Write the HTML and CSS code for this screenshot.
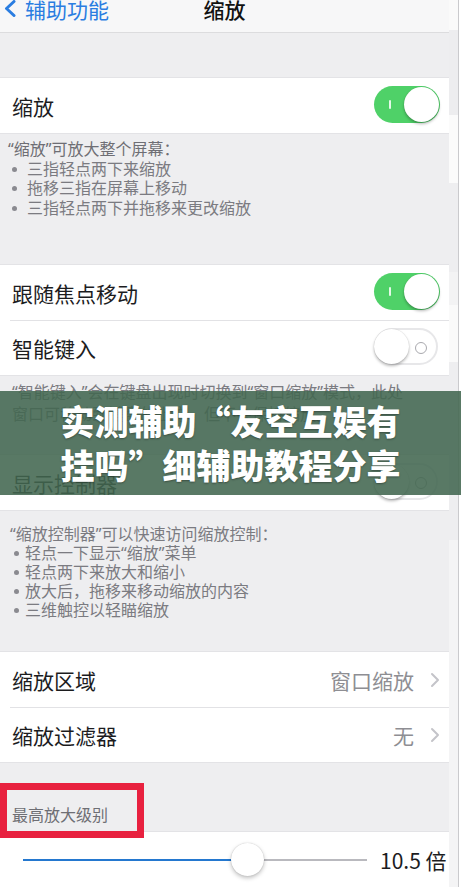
FILE: index.html
```html
<!DOCTYPE html>
<html lang="zh-CN">
<head>
<meta charset="utf-8">
<title>缩放</title>
<link rel="stylesheet" href="styles.css">
</head>
<body>
<div class="screen">
  <div class="main">
    <header class="nav">
      <div class="back">
        <svg class="chev-back" width="14" height="17" viewBox="0 0 14 17"><polyline points="11,1.5 3.5,8.5 11,15.5" fill="none" stroke="#2a7de1" stroke-width="3" stroke-linecap="round" stroke-linejoin="round"/></svg>
        <span class="back-text">辅助功能</span>
      </div>
      <div class="title">缩放</div>
      <div></div>
    </header>
    <div class="gap-top"></div>

    <div class="group">
      <div class="row"><span class="label">缩放</span><span class="toggle on"><span class="knob"></span></span></div>
    </div>
    <div class="footer f1">
      <p class="lead">“缩放”可放大整个屏幕：</p>
      <p class="item wide"><i class="dot"></i>三指轻点两下来缩放</p>
      <p class="item wide"><i class="dot"></i>拖移三指在屏幕上移动</p>
      <p class="item wide"><i class="dot"></i>三指轻点两下并拖移来更改缩放</p>
    </div>

    <div class="group">
      <div class="row"><span class="label">跟随焦点移动</span><span class="toggle on"><span class="knob"></span></span></div>
      <div class="sep"></div>
      <div class="row short"><span class="label">智能键入</span><span class="toggle off"><span class="knob"></span></span></div>
    </div>
    <div class="footer f3">
      <p>“智能键入”会在键盘出现时切换到“窗口缩放”模式，此处</p>
      <p>窗口可移动到键盘的上方，但不会保持缩放。</p>
    </div>

    <div class="group">
      <div class="row"><span class="label">显示控制器</span><span class="toggle off"><span class="knob"></span></span></div>
    </div>
    <div class="footer f4">
      <p class="lead">“缩放控制器”可以快速访问缩放控制：</p>
      <p class="item"><i class="dot"></i>轻点一下显示“缩放”菜单</p>
      <p class="item"><i class="dot"></i>轻点两下来放大和缩小</p>
      <p class="item"><i class="dot"></i>放大后，拖移来移动缩放的内容</p>
      <p class="item"><i class="dot"></i>三维触控以轻瞄缩放</p>
    </div>

    <div class="group">
      <div class="row"><span class="label">缩放区域</span><span class="value">窗口缩放<svg class="chev" width="10" height="16" viewBox="0 0 10 16"><polyline points="2,2 8,8 2,14" fill="none" stroke="#c4c4c9" stroke-width="2" stroke-linecap="round" stroke-linejoin="round"/></svg></span></div>
      <div class="sep"></div>
      <div class="row short"><span class="label">缩放过滤器</span><span class="value">无<svg class="chev" width="10" height="16" viewBox="0 0 10 16"><polyline points="2,2 8,8 2,14" fill="none" stroke="#c4c4c9" stroke-width="2" stroke-linecap="round" stroke-linejoin="round"/></svg></span></div>
    </div>
    <div class="section-label">最高放大级别</div>
    <div class="group">
      <div class="row slider-row">
        <div class="track"><div class="fill" style="width:225px"></div><span class="thumb" style="left:208px"></span></div>
        <span class="level">10.5 倍</span>
      </div>
    </div>
  </div>
  <div class="edge">
    <div class="e1"></div><div class="e2"></div><div class="e3"></div><div class="e4"></div><div class="e5"></div><div class="e6"></div><div class="e7"></div><div class="e8"></div>
  </div>
  <div class="rule"></div>
  <div class="tail"></div>
</div>

<div class="banner">
  <span class="bline">实测辅助“友空互娱有</span>
  <span class="bline">挂吗”细辅助教程分享</span>
</div>
<div class="mark"></div>
</body>
</html>
```

FILE: styles.css
```css
* { box-sizing: border-box; }
html, body { margin: 0; padding: 0; }
body {
  width: 461px;
  height: 887px;
  overflow: hidden;
  position: relative;
  background: #ffffff;
  font-family: "Noto Sans CJK SC", "Noto Sans", sans-serif;
  color: #1c1c1e;
}
p { margin: 0; }

.screen { display: flex; height: 887px; }
.main { width: 449px; flex: none; background: #eeeef0; display: flex; flex-direction: column; }

.nav {
  height: 33px;
  background: #f7f7f8;
  border-bottom: 1px solid #dcdcde;
  display: grid;
  grid-template-columns: 1fr auto 1fr;
  align-items: center;
  padding-bottom: 16px;
}
.back { display: flex; align-items: center; padding-left: 3px; }
.chev-back { flex: none; }
.back-text { margin-left: 8px; font-size: 21px; line-height: 16px; color: #2a7de1; }
.title { font-size: 21px; line-height: 16px; font-weight: 500; color: #111; }

.gap-top { height: 45px; flex: none; }

.group { background: #ffffff; box-shadow: 0 -1px 0 #e3e3e6, 0 1px 0 #e3e3e6; }
.row {
  height: 55px;
  display: flex;
  align-items: center;
  justify-content: space-between;
  padding: 0 9px 0 12px;
}
.row.short { height: 54px; }
.label { font-size: 21px; color: #1c1c1e; }
.sep { height: 1px; margin-left: 10px; background: #e2e2e5; }

.toggle { position: relative; width: 66px; height: 37px; border-radius: 19px; flex: none; margin-top: -3px; }
.toggle.on { background: #4fd168; }
.toggle.on::before {
  content: ""; position: absolute; left: 15px; top: 14px;
  width: 2px; height: 9px; background: rgba(255,255,255,.85); border-radius: 1px;
}
.toggle .knob {
  position: absolute; top: 1px; width: 35px; height: 35px; border-radius: 50%;
  background: #ffffff; box-shadow: 0 2px 3px rgba(0,0,0,.28), 0 0 1px rgba(0,0,0,.2);
}
.toggle.on .knob { right: 1px; }
.toggle.off { background: #fff; border: 2px solid #e7e7e9; width: 64px; margin-right: 2px; }
.toggle.off .knob { left: -2px; top: -1px; }
.toggle.off::after {
  content: ""; position: absolute; right: 9px; top: 12px;
  width: 10px; height: 10px; border-radius: 50%; border: 1.5px solid #a9a9ae;
}

.value { display: flex; align-items: center; font-size: 21px; color: #8e8e93; }
.chev { margin-left: 16px; margin-right: 0; }

.footer { color: #7b7b81; font-size: 16px; flex: none; font-family: "Noto Sans", "Noto Sans CJK SC", sans-serif; }
.footer .item { display: flex; align-items: center; }
.dot { display: block; width: 5px; height: 5px; border-radius: 50%; background: #8a8a90; margin-left: 4px; margin-right: 6px; flex: none; }
.item.wide .dot { margin-right: 10px; }
.f1 { height: 132px; padding: 7px 0 0 8px; line-height: 19.5px; }
.f1 .lead { color: #6e6e74; }
.f3 { height: 80px; padding: 7px 0 0 12px; line-height: 21.5px; }
.f4 { height: 142px; padding: 15px 0 0 10px; line-height: 19px; }

.section-label { height: 70px; padding: 42px 0 0 12px; font-size: 16px; line-height: 20px; color: #6e6e74; flex: none; }

.slider-row { padding: 0 0 0 23px; justify-content: flex-start; }
.track { position: relative; width: 344px; height: 2px; background: #b9b9be; margin-top: 1px; flex: none; }
.fill { height: 2px; background: #2478cf; }
.thumb {
  position: absolute; top: -16px; width: 33px; height: 33px; border-radius: 50%;
  background: #fff; box-shadow: 0 2px 4px rgba(0,0,0,.25), 0 0 1px rgba(0,0,0,.25);
}
.level { margin-left: 13px; font-size: 21px; color: #1c1c1e; }

.edge { width: 9px; flex: none; display: flex; flex-direction: column; }
.edge div { flex: none; }
.e1 { height: 30px; background: #fafafa; }
.e2 { height: 85px; background: #ededef; }
.e3 { height: 68px; background: #fbfbfb; }
.e4 { height: 89px; background: #eeeef0; }
.e5 { height: 33px; background: #f3f3f4; }
.e6 { height: 57px; background: #fafafa; }
.e7 { height: 178px; background: #eeeef0; }
.e8 { height: 347px; background: #f4f4f5; }
.rule { width: 1px; flex: none; background: #cacacd; }
.tail { width: 2px; flex: none; background: #ffffff; }

.banner {
  position: absolute; left: 0; right: 0; top: 391px; height: 104px;
  background: rgba(66,102,80,.88);
  padding-top: 8px;
  text-align: center;
  color: #ffffff;
  font-size: 34px;
  line-height: 44px;
  font-weight: 900;
  text-shadow: 0 1px 2px rgba(0,0,0,.35);
}
.bline { display: block; }

.mark {
  position: absolute; left: 0; top: 783px; width: 144px; height: 55px;
  border: 7px solid #e8213f;
}
```
